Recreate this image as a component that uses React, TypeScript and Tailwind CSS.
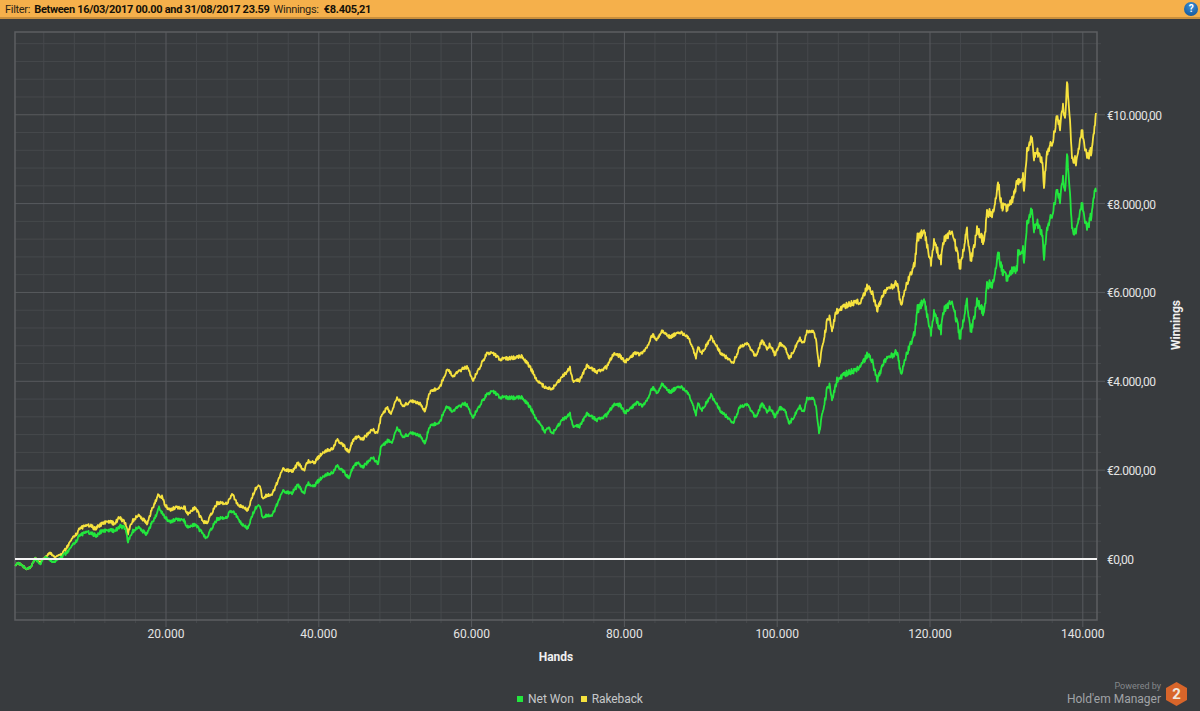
import React from 'react';

const GREEN: number[][] = [[15,565],[18,563],[22,565],[27,570],[32,565],[35,558],[40,564],[45,557],[53,562],[60,559],[67,552],[75,543],[80,535],[88,532],[97,536],[100,532],[108,530],[115,531],[120,526],[125,528],[128,541],[132,532],[138,527],[146,534],[152,523],[157,513],[159,507],[163,515],[170,522],[177,519],[183,519],[188,528],[195,524],[206,538],[217,519],[227,518],[230,510],[235,513],[242,525],[248,528],[255,508],[260,506],[262,516],[272,516],[283,491],[292,493],[298,485],[304,493],[308,483],[313,487],[322,477],[333,472],[337,465],[343,471],[349,478],[353,467],[357,463],[363,467],[372,457],[378,463],[381,448],[388,440],[392,444],[397,427],[403,437],[412,433],[420,435],[425,444],[429,427],[440,422],[446,406],[452,411],[465,403],[468,407],[473,417],[480,405],[487,394],[493,391],[500,397],[513,398],[522,397],[530,407],[537,420],[545,432],[548,427],[553,433],[562,420],[570,414],[573,426],[580,426],[587,413],[597,420],[607,415],[613,405],[620,405],[625,413],[630,408],[637,403],[642,406],[647,400],[653,387],[657,393],[662,384],[670,392],[680,386],[688,393],[696,414],[698,403],[702,410],[711,395],[720,410],[733,423],[740,407],[747,404],[756,418],[762,403],[767,413],[770,407],[775,417],[780,408],[785,410],[789,424],[800,407],[804,412],[807,398],[813,398],[816,407],[819,433],[822,417],[827,390],[830,385],[832,402],[837,380],[847,373],[857,370],[862,363],[867,355],[872,360],[877,380],[885,360],[897,352],[901,375],[907,353],[915,332],[917,310],[924,300],[931,333],[934,313],[941,330],[943,312],[952,300],[955,313],[960,337],[967,302],[971,332],[977,302],[984,313],[987,285],[994,283],[998,253],[1003,273],[1008,278],[1012,270],[1017,269],[1018,252],[1023,250],[1024,265],[1027,223],[1032,208],[1034,230],[1037,223],[1042,233],[1044,260],[1047,228],[1053,213],[1057,187],[1060,200],[1063,180],[1065,193],[1067,153],[1070,193],[1072,228],[1075,233],[1082,205],[1087,230],[1092,213],[1095,187],[1096,192]];

const YELLOW: number[][] = [[15,565],[18,563],[22,565],[27,570],[32,565],[35,558],[40,562],[50,553],[55,557],[62,555],[70,542],[78,532],[80,528],[90,525],[95,529],[100,525],[108,521],[115,524],[119,517],[125,523],[128,533],[131,523],[138,515],[147,523],[153,507],[158,495],[162,497],[165,505],[170,510],[177,507],[185,508],[188,515],[195,507],[203,522],[207,522],[217,503],[227,504],[232,493],[238,505],[248,510],[255,489],[260,486],[262,497],[272,495],[283,469],[293,471],[298,463],[304,470],[308,461],[314,463],[322,453],[333,448],[337,439],[343,445],[349,452],[353,440],[357,437],[363,439],[372,429],[377,433],[381,418],[387,407],[391,415],[397,397],[403,406],[412,401],[420,403],[425,412],[429,393],[440,387],[447,369],[453,376],[465,367],[468,368],[473,380],[480,367],[487,353],[493,353],[500,359],[513,358],[522,356],[530,367],[538,382],[546,388],[553,388],[562,377],[570,368],[573,381],[580,380],[587,365],[597,372],[607,367],[613,354],[620,356],[625,362],[630,357],[635,353],[640,355],[647,347],[653,334],[656,340],[662,331],[670,337],[680,332],[688,337],[696,357],[698,347],[702,353],[711,337],[720,352],[733,363],[740,347],[747,343],[756,357],[762,340],[767,350],[770,344],[775,355],[780,344],[785,347],[789,359],[800,339],[804,343],[807,331],[813,331],[816,340],[819,366],[822,350],[827,322],[830,317],[832,333],[836,312],[847,305],[857,302],[860,303],[867,287],[872,292],[877,310],[885,291],[897,283],[901,306],[907,283],[915,263],[917,238],[924,231],[931,263],[934,242],[941,260],[943,242],[952,230],[955,242],[960,267],[967,231],[971,261],[977,230],[984,242],[987,213],[994,213],[998,183],[1002,207],[1008,207],[1013,198],[1017,182],[1023,177],[1024,193],[1027,150],[1032,136],[1034,158],[1037,152],[1042,160],[1044,188],[1047,152],[1053,142],[1057,113],[1060,127],[1063,108],[1065,120],[1067,81],[1070,120],[1072,158],[1076,161],[1082,132],[1087,158],[1092,150],[1096,113]];

const rand = (x: number) => {
    const s = Math.sin(x * 12.9898) * 43758.5453;
    return s - Math.floor(s) - 0.5;
};

// stretch the traced corners into a noisy walk, both lines share the same noise
const toLine = (pts: number[][]) => {
    const out: string[] = [];
    for (let i = 0; i < pts.length - 1; i++) {
        const [x0, y0] = pts[i];
        const [x1, y1] = pts[i + 1];
        for (let x = x0; x < x1; x += 0.5) {
            const t = (x - x0) / (x1 - x0);
            const amp = x > 915 ? 9 : x > 820 ? 6 : x > 60 ? 3.5 : 2.5;
            out.push(x + ',' + (y0 + (y1 - y0) * t + amp * rand(x)).toFixed(1));
        }
    }
    const last = pts[pts.length - 1];
    out.push(last[0] + ',' + last[1]);
    return out.join(' ');
};

const PLOT = { left: 15, right: 1097, top: 32, bottom: 620 };
const X_STEP = 152.8;
const Y_STEP = 88.85;
const ZERO_Y = 559;
const X_ORIGIN = 166;

const xTicks = [1, 2, 3, 4, 5, 6, 7].map(n => ({ x: X_ORIGIN + (n - 1) * X_STEP, label: (n * 20) + '.000' }));
const yTicks = [0, 1, 2, 3, 4, 5].map(n => ({ y: ZERO_Y - n * Y_STEP, label: n === 0 ? '€0,00' : '€' + (n * 2) + '.000,00' }));

const minorX: number[] = [];
for (let i = -4; i <= 35; i++) {
    const x = X_ORIGIN + i * (X_STEP / 5);
    if (i % 5 !== 0 && x > PLOT.left + 2 && x < PLOT.right - 2) minorX.push(x);
}
const minorY: number[] = [];
for (let i = -3; i <= 29; i++) {
    const y = ZERO_Y - i * (Y_STEP / 5);
    if (i % 5 !== 0 && y > PLOT.top + 2 && y < PLOT.bottom - 2) minorY.push(y);
}

const Chart = () => (
    <svg viewBox="0 17 1200 628" className="block w-[1200px] h-[628px] shrink-0">
        {minorX.map(x => <line key={x} x1={x} x2={x} y1={PLOT.top} y2={PLOT.bottom + 3} stroke="#46494c" strokeWidth="1" />)}
        {minorY.map(y => <line key={y} x1={PLOT.left} x2={PLOT.right + 4} y1={y} y2={y} stroke="#46494c" strokeWidth="1" />)}
        {xTicks.map(t => <line key={t.x} x1={t.x} x2={t.x} y1={PLOT.top} y2={PLOT.bottom + 7} stroke="#585b5e" strokeWidth="1" />)}
        {yTicks.slice(1).map(t => <line key={t.y} x1={PLOT.left} x2={PLOT.right + 8} y1={t.y} y2={t.y} stroke="#585b5e" strokeWidth="1" />)}
        <rect x={PLOT.left} y={PLOT.top} width={PLOT.right - PLOT.left} height={PLOT.bottom - PLOT.top} fill="none" stroke="#5c5f62" strokeWidth="1.5" />

        <polyline points={toLine(YELLOW)} fill="none" stroke="#f6e23e" strokeWidth="1.8" strokeLinejoin="round" />
        <polyline points={toLine(GREEN)} fill="none" stroke="#22e63d" strokeWidth="1.8" strokeLinejoin="round" />
        <line x1={PLOT.left} x2={PLOT.right} y1={ZERO_Y} y2={ZERO_Y} stroke="#f4f4f4" strokeWidth="2" />

        {xTicks.map(t => (
            <text key={t.label} x={t.x} y={637.5} textAnchor="middle" fontSize="12" fill="#e4e4e4" className="font-['Roboto',sans-serif]">{t.label}</text>
        ))}
        {yTicks.map(t => (
            <text key={t.label} x={1107} y={t.y + 5} fontSize="12" textLength={t.label === '€0,00' ? 27 : t.label.length === 10 ? 55 : 49} fill="#e4e4e4" className="font-['Roboto',sans-serif]">{t.label}</text>
        ))}
        <text x={1180} y={325} transform="rotate(-90 1180 325)" textAnchor="middle" fontSize="12" fontWeight="700" fill="#f0f0f0" className="font-['Roboto',sans-serif]">Winnings</text>
    </svg>
);

const App: React.FC = () => {
    return (
        <div className="w-full h-[711px] overflow-hidden bg-[#383b3e] flex flex-col font-['Roboto',sans-serif]">
            {/* filter bar */}
            <div className="h-[16px] pt-[1px] shrink-0 bg-[#f5b04b] border-b-2 border-[#c98f3c] flex items-center pl-[5px] pr-[2px] text-[11px] tracking-[-0.3px] leading-none text-[#2b2416] box-content">
                <span className="mr-[4px]">Filter:</span>
                <span className="font-bold text-[#141008] mr-[4px]">Between 16/03/2017 00.00 and 31/08/2017 23.59</span>
                <span className="mr-[5px]">Winnings:</span>
                <span className="font-bold text-[#141008]">€8.405,21</span>
                <span className="ml-auto w-[14px] h-[14px] rounded-full bg-[radial-gradient(circle_at_50%_30%,#3a8fd6,#0f4f91)] text-white text-[10px] font-bold flex items-center justify-center">?</span>
            </div>

            <div className="-mt-[2px]">
                <Chart />
            </div>

            <div className="h-[24px] flex items-center justify-center w-[1112px] text-[12px] font-bold text-[#f0f0f0]">Hands</div>

            <div className="flex-1 flex items-end pb-[4px] pr-[13px]">
                <div className="ml-[517px] flex items-center -mb-[1px] text-[12px] text-[#c6c8ca]">
                    <span className="w-[6px] h-[6px] bg-[#22e63d] mr-[5px]"></span>
                    <span className="mr-[7px]">Net Won</span>
                    <span className="w-[6px] h-[6px] bg-[#f6e23e] mr-[5px]"></span>
                    <span className="tracking-[-0.1px]">Rakeback</span>
                </div>
                <div className="ml-auto flex items-center">
                    <div className="flex flex-col items-end mr-[5px]">
                        <span className="text-[9px] leading-[11px] text-[#85888b]">Powered by</span>
                        <span className="text-[12px] leading-[14px] mb-[1px] text-[#a0a3a6]">Hold'em Manager</span>
                    </div>
                    <div className="relative w-[21px] h-[24px] flex items-center justify-center">
                        <svg viewBox="0 0 21 24" className="absolute inset-0 w-full h-full">
                            <polygon points="10.5,0 21,6 21,18 10.5,24 0,18 0,6" fill="#d8652a" />
                        </svg>
                        <span className="relative text-[15px] font-bold text-[#f0e6dc] leading-none">2</span>
                    </div>
                </div>
            </div>
        </div>
    );
};

export default App;
